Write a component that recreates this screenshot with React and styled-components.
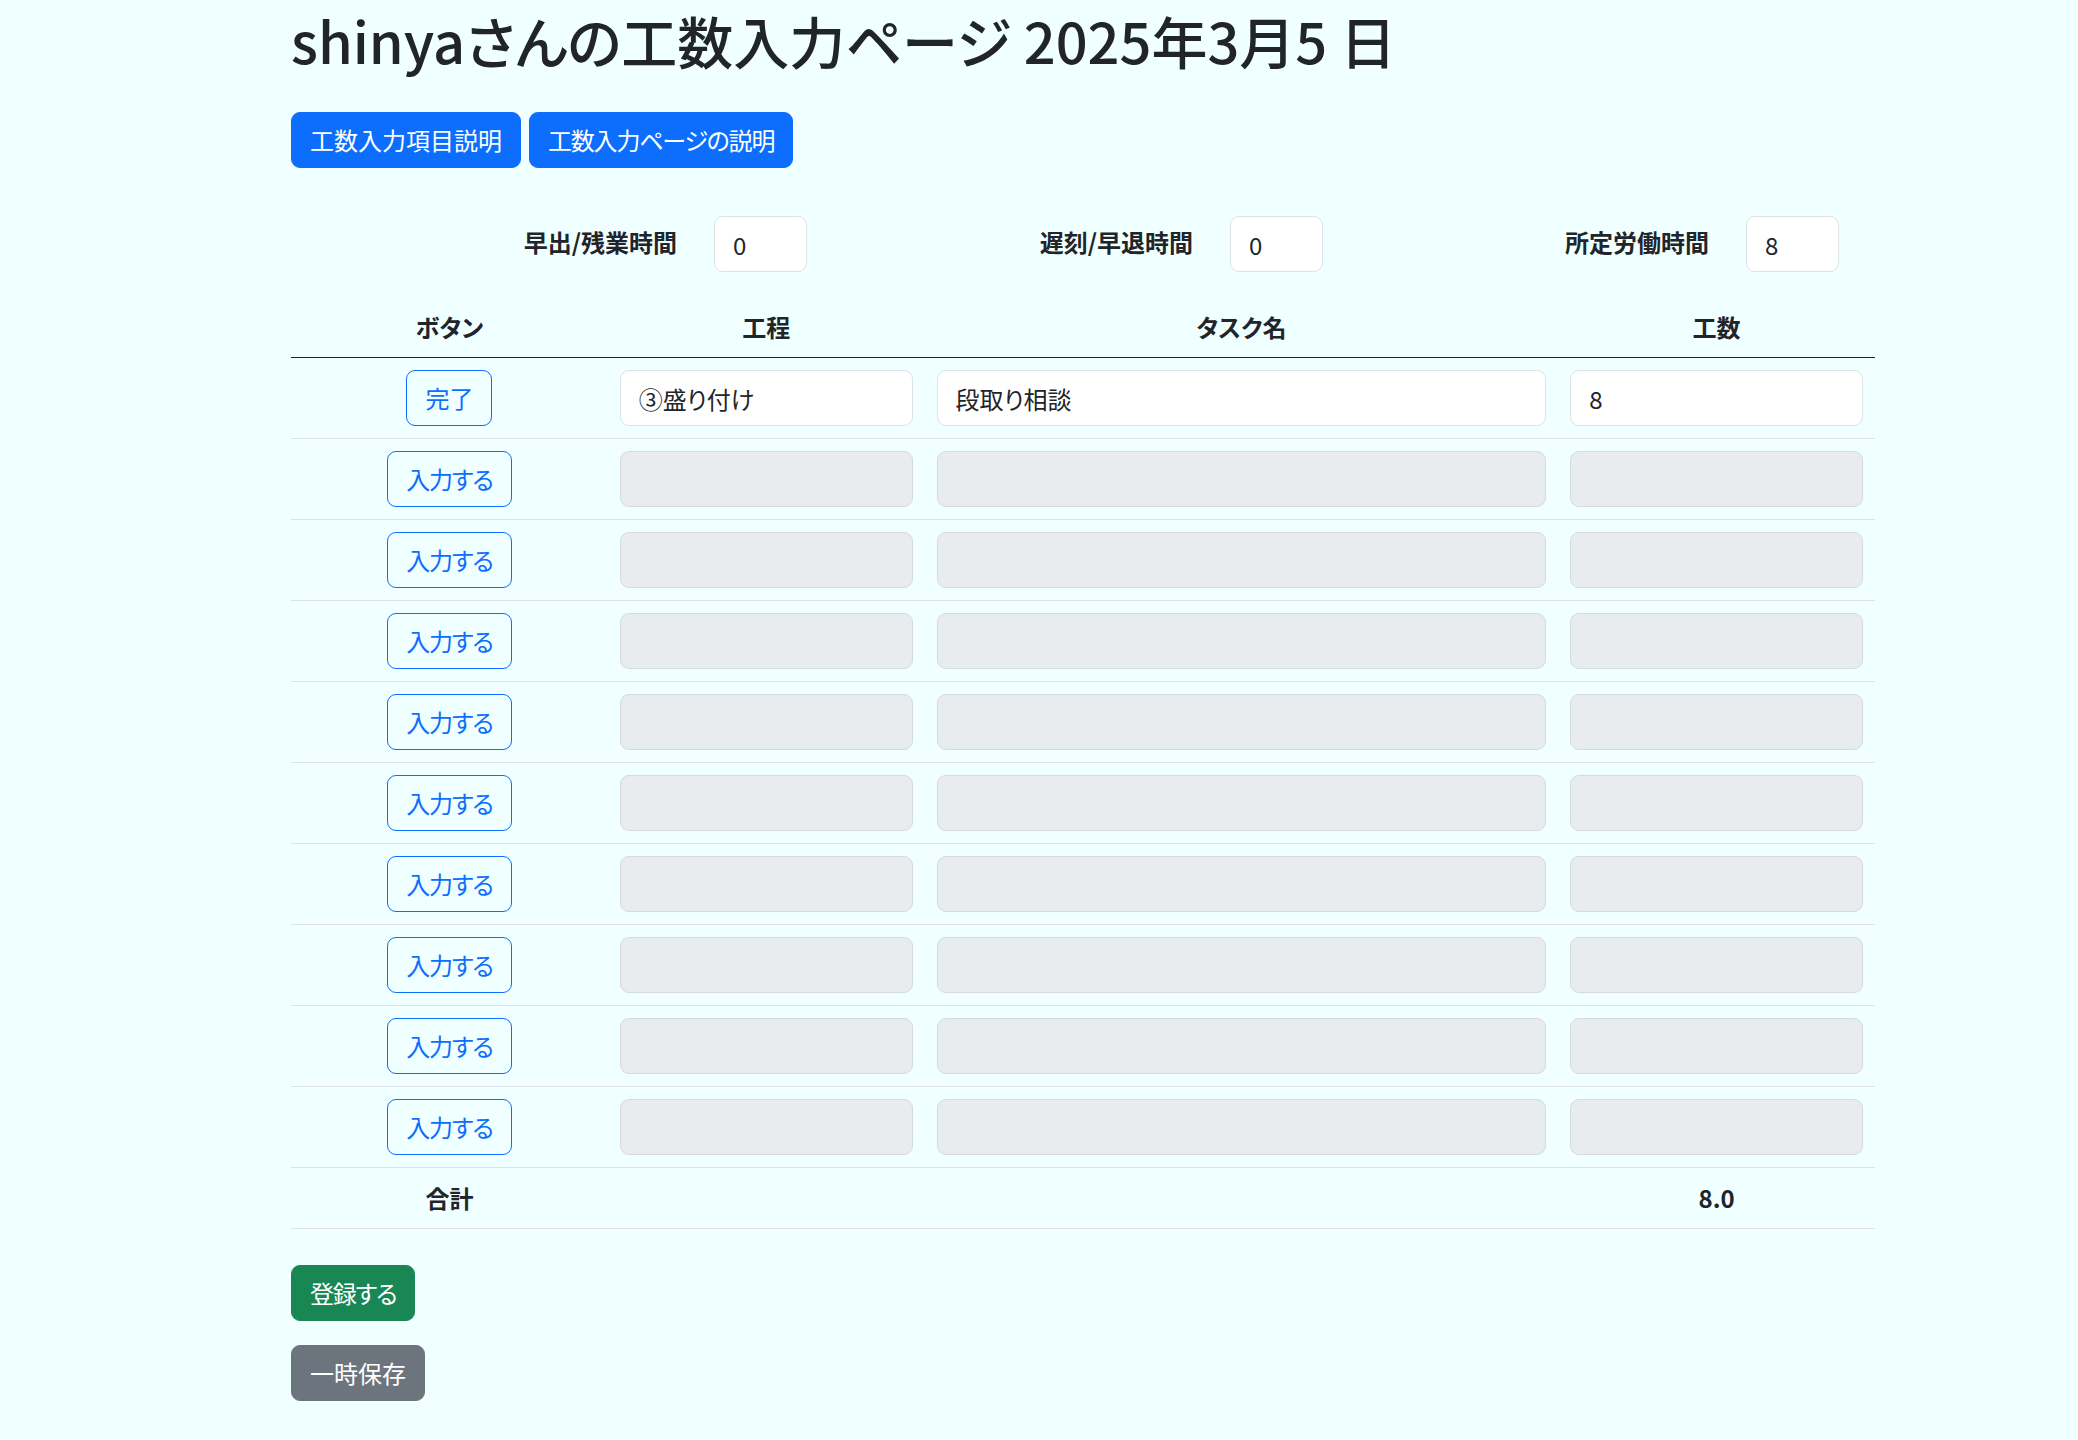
import React from "react";
import styled, { createGlobalStyle, css } from "styled-components";

const GlobalStyle = createGlobalStyle`
  * {
    box-sizing: border-box;
  }
  body {
    margin: 0;
    background: #f0ffff;
    color: #212529;
    font-family: "Noto Sans CJK JP", "Noto Sans", sans-serif;
    font-size: 24px;
    line-height: 1.5;
    font-feature-settings: "palt";
  }
`;

const rows = [
  { done: true, process: "③盛り付け", task: "段取り相談", hours: "8" },
  ...Array.from({ length: 9 }, () => ({ done: false, process: "", task: "", hours: "" })),
];

const App = () => {
  return (
    <>
      <GlobalStyle />
      <Page>
        <Title>shinyaさんの工数入力ページ 2025年3月5 日</Title>

        <HelpBar>
          <Button variant="primary">工数入力項目説明</Button>
          <Button variant="primary" tight>工数入力ページの説明</Button>
        </HelpBar>

        <TimeRow>
          <TimeField>
            <TimeLabel>早出/残業時間</TimeLabel>
            <TimeInput defaultValue="0" />
          </TimeField>
          <TimeField>
            <TimeLabel>遅刻/早退時間</TimeLabel>
            <TimeInput defaultValue="0" />
          </TimeField>
          <TimeField>
            <TimeLabel>所定労働時間</TimeLabel>
            <TimeInput defaultValue="8" />
          </TimeField>
        </TimeRow>

        <Table>
          <colgroup>
            <col style={{ width: "20%" }} />
            <col style={{ width: "20%" }} />
            <col style={{ width: "40%" }} />
            <col style={{ width: "20%" }} />
          </colgroup>
          <thead>
            <tr>
              <Th>ボタン</Th>
              <Th>工程</Th>
              <Th>タスク名</Th>
              <Th>工数</Th>
            </tr>
          </thead>
          <tbody>
            {rows.map((row, i) => (
              <tr key={i}>
                <Td center>
                  <Button variant="outline" tight={!row.done}>
                    {row.done ? "完了" : "入力する"}
                  </Button>
                </Td>
                <Td>
                  <Field defaultValue={row.process} disabled={!row.done} />
                </Td>
                <Td>
                  <Field defaultValue={row.task} disabled={!row.done} />
                </Td>
                <Td>
                  <Field defaultValue={row.hours} disabled={!row.done} />
                </Td>
              </tr>
            ))}
            <tr>
              <Td center bold>合計</Td>
              <Td />
              <Td />
              <Td center bold>8.0</Td>
            </tr>
          </tbody>
        </Table>

        <Actions>
          <Button variant="success" tight>登録する</Button>
          <Button variant="secondary">一時保存</Button>
        </Actions>
      </Page>
    </>
  );
};

const Page = styled.main`
  width: 1584px;
  margin-left: 291px;
  padding: 6px 0 40px;
`;

const Title = styled.h1`
  margin: 0 0 39px;
  font-size: 56px;
  font-weight: 500;
  line-height: 1.2;
`;

const HelpBar = styled.div`
  display: flex;
  gap: 8px;
  margin-bottom: 48px;
`;

const variants = {
  primary: css`
    background: #0d6efd;
    border-color: #0d6efd;
    color: #fff;
  `,
  success: css`
    background: #198754;
    border-color: #198754;
    color: #fff;
  `,
  secondary: css`
    background: #6c757d;
    border-color: #6c757d;
    color: #fff;
  `,
  outline: css`
    background: transparent;
    border-color: #0d6efd;
    color: #0d6efd;
  `,
};

const Button = styled.button`
  display: inline-block;
  height: 56px;
  padding: 9px 18px;
  border: 1px solid transparent;
  border-radius: 9px;
  font-family: inherit;
  font-size: 24px;
  line-height: 36px;
  font-feature-settings: "palt";
  letter-spacing: ${({ tight }) => (tight ? "-1.2px" : "0")};
  cursor: pointer;
  ${({ variant }) => variants[variant]}
`;

const TimeRow = styled.div`
  display: grid;
  grid-template-columns: repeat(3, 516px);
  margin-bottom: 25px;
`;

const TimeField = styled.div`
  display: flex;
  justify-content: flex-end;
  align-items: center;
  gap: 37px;
`;

const TimeLabel = styled.label`
  font-weight: 700;
  transform: translateY(-2px);
`;

const Field = styled.input`
  display: block;
  width: 100%;
  height: 56px;
  padding: 9px 18px;
  border: 1px solid #dee2e6;
  border-radius: 9px;
  background: #fff;
  color: #212529;
  font-family: inherit;
  font-size: 24px;
  line-height: 36px;
  font-feature-settings: "palt";

  &:disabled {
    background: #e9ecef;
    border-color: #d6dadf;
  }
`;

const TimeInput = styled(Field)`
  width: 93px;
`;

const Table = styled.table`
  width: 100%;
  border-collapse: collapse;
  table-layout: fixed;
`;

const Th = styled.th`
  padding: 12px;
  font-weight: 700;
  text-align: center;
  line-height: 36px;
  border-bottom: 1px solid #212529;
`;

const Td = styled.td`
  padding: 12px;
  line-height: 36px;
  border-bottom: 1px solid #dee2e6;
  text-align: ${({ center }) => (center ? "center" : "left")};
  font-weight: ${({ bold }) => (bold ? 700 : 400)};
`;

const Actions = styled.div`
  display: flex;
  flex-direction: column;
  align-items: flex-start;
  gap: 24px;
  margin-top: 36px;
`;

export default App;
